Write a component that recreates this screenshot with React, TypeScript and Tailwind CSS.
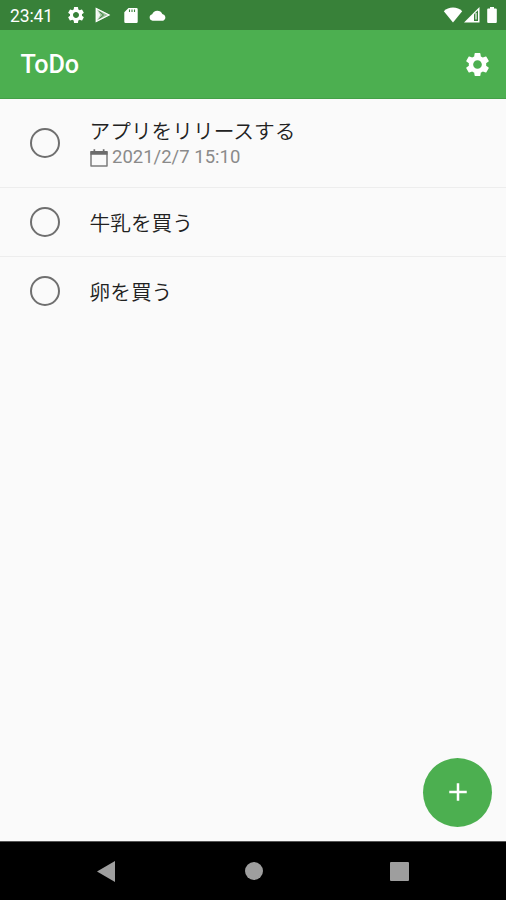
import React from 'react';
import { MdAdd, MdSettings } from 'react-icons/md';

interface Todo {
  id: number;
  title: string;
  due?: string;
}

const todos: Todo[] = [
  { id: 1, title: 'アプリをリリースする', due: '2021/2/7 15:10' },
  { id: 2, title: '牛乳を買う' },
  { id: 3, title: '卵を買う' },
];

const PlayIcon = () => (
  <svg width="16" height="16" viewBox="0 0 16 16" fill="none">
    <path d="M1 1v14l4.500-7z" fill="#fff" fillOpacity="0.85" />
    <path d="M1 1v14l14-7z" fill="#fff" fillOpacity="0.5" />
    <path d="M4.500 4.500 8.500 8 4.500 11.500" stroke="#388139" strokeWidth="1" />
    <path d="M1.200 1.500v13l12.800-6.500z" stroke="#fff" strokeWidth="1.200" />
  </svg>
);

const SdCardIcon = () => (
  <svg width="14" height="15" viewBox="0 0 14 15" fill="none">
    <path d="M4.500 0h8a1.200 1.200 0 0 1 1.200 1.200v12.600a1.200 1.200 0 0 1-1.200 1.200h-11A1.200 1.200 0 0 1 .3 13.800V4.200z" fill="#fff" />
    <path d="M5.500 1.500v2.500M8 1.500v2.500M10.500 1.500v2.500" stroke="#388139" strokeWidth="1.100" />
  </svg>
);

const CloudIcon = () => (
  <svg width="18" height="11" viewBox="0 0 18 11" fill="#fff">
    <path d="M3.600 10.700a3.300 3.300 0 0 1-.4-6.500A5.500 5.500 0 0 1 13.300 4a3.500 3.500 0 0 1 1 6.700z" />
  </svg>
);

const WifiIcon = () => (
  <svg width="20" height="16" viewBox="0 0 20 16" fill="#fff">
    <path d="M10 15.500.8 4.200C3.200 1.800 6.400.5 10 .5s6.800 1.300 9.200 3.700z" />
  </svg>
);

const SignalIcon = () => (
  <svg width="16" height="16" viewBox="0 0 16 16" fill="none">
    <path d="M0 15.500 15.500 0v15.500z" fill="#fff" />
    <path d="M10 7.300 14 3.300v10.700h-4z" fill="#388139" />
    <path d="M12 6v6.500" stroke="#fff" strokeWidth="1.200" />
  </svg>
);

const BatteryIcon = () => (
  <svg width="10" height="16" viewBox="0 0 10 16" fill="#fff">
    <path d="M3 0h4v1.500h1.800q1 0 1 1V15q0 1-1 1H1.200q-1 0-1-1V2.500q0-1 1-1H3z" />
  </svg>
);

const CalendarIcon = () => (
  <svg width="18" height="18" viewBox="0 0 18 18" fill="none">
    <path d="M1 3h16v14H1z" stroke="#7c7c7c" strokeWidth="1.500" strokeLinejoin="round" />
    <path d="M.5 2h17v3.800H.5zM3.500.3h1.700v2.500H3.500zM12.800.3h1.700v2.500h-1.700z" fill="#6c6c6c" />
  </svg>
);

const StatusBar = () => (
  <div className="flex h-[30px] items-center justify-between bg-[#388139] pl-[10px] pr-[9px] text-white">
    <div className="flex items-center">
      <span className="w-[56px] pt-[3px] text-[17.500px] leading-none tracking-[-0.1px]">23:41</span>
      <MdSettings size={20} />
      <span className="ml-[9px]"><PlayIcon /></span>
      <span className="ml-[13px]"><SdCardIcon /></span>
      <span className="ml-[11px]"><CloudIcon /></span>
    </div>
    <div className="flex items-center">
      <WifiIcon />
      <span className="ml-px"><SignalIcon /></span>
      <span className="ml-[7px]"><BatteryIcon /></span>
    </div>
  </div>
);

const TodoRow: React.FC<{ todo: Todo }> = ({ todo }) => (
  <li className={`flex items-center border-b border-[#ededed] pl-[29.500px] last:h-[68px] last:border-0 ${todo.due ? 'h-[89px]' : 'h-[69px]'}`}>
    <button className="size-[30px] shrink-0 rounded-full border-[2.500px] border-[#6f6f6f]" />
    <div className="ml-[30px] pt-[3px]">
      <p className="text-[20.700px] font-[350] leading-[26px] text-[#212121]">{todo.title}</p>
      {todo.due && (
        <p className="flex items-center gap-[4.500px] text-[18.500px] leading-[25px] text-[#8a8a8a]">
          <CalendarIcon />
          {todo.due}
        </p>
      )}
    </div>
  </li>
);

export default function App() {
  return (
    <div className="flex h-[900px] w-[506px] flex-col overflow-hidden bg-[#fafafa] font-[Roboto,'Noto_Sans_CJK_JP',sans-serif]">
      <StatusBar />
      <header className="flex h-[69px] items-center justify-between border-b border-[#43a047] bg-[#4caf50] pl-[20.500px] pr-[14px] text-white">
        <h1 className="pt-[2px] text-[25.200px] font-medium leading-none">ToDo</h1>
        <MdSettings size={29} />
      </header>
      <main className="flex flex-1 flex-col justify-between">
        <ul>
          {todos.map((todo) => (
            <TodoRow key={todo.id} todo={todo} />
          ))}
        </ul>
        <button className="mb-[14.500px] mr-[14px] flex size-[69px] items-center justify-center self-end rounded-full bg-[#4caf50] text-white">
          <MdAdd size={30} />
        </button>
      </main>
      <nav className="flex h-[59px] items-center border-t border-[#555] bg-black pl-[97px]">
        <svg width="18" height="21" viewBox="0 0 18 21" fill="#9e9e9e">
          <path d="M0 10.500 18 0v21z" />
        </svg>
        <div className="ml-[129.500px] size-[18px] rounded-full bg-[#9e9e9e]" />
        <div className="ml-[127px] size-[19px] rounded-[1px] bg-[#9e9e9e]" />
      </nav>
    </div>
  );
}
